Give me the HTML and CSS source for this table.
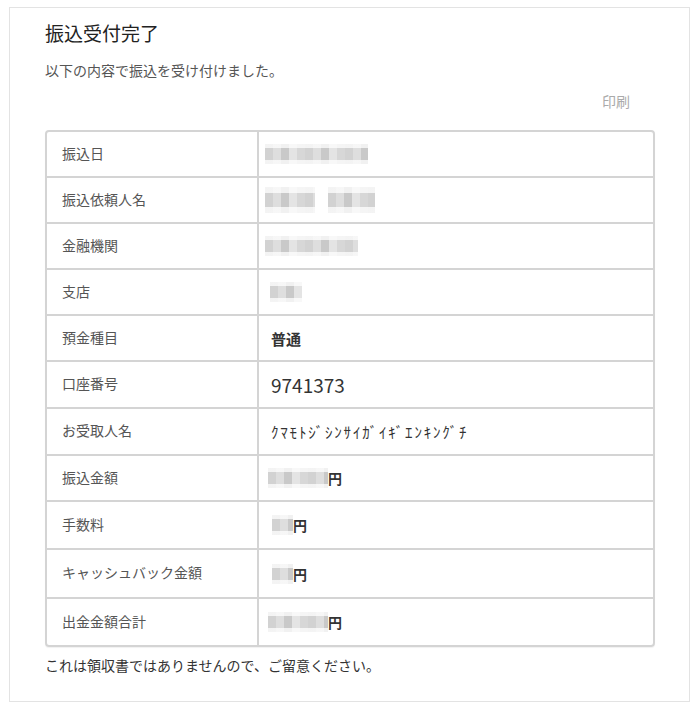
FILE: index.html
```html
<!DOCTYPE html>
<html lang="ja">
<head>
<meta charset="utf-8">
<title>振込受付完了</title>
<link rel="stylesheet" href="styles.css">
</head>
<body>
<div class="box">
  <h1 class="title">振込受付完了</h1>
  <p class="lead">以下の内容で振込を受け付けました。</p>
  <div class="print-row"><a class="print">印刷</a></div>
  <div class="table">
    <div class="row first">
      <div class="label">振込日</div>
      <div class="value"><span class="mosaic m-date"></span></div>
    </div>
    <div class="row">
      <div class="label">振込依頼人名</div>
      <div class="value"><span class="mosaic m-name1"></span><span class="mosaic m-name2"></span></div>
    </div>
    <div class="row">
      <div class="label">金融機関</div>
      <div class="value"><span class="mosaic m-bank"></span></div>
    </div>
    <div class="row">
      <div class="label">支店</div>
      <div class="value"><span class="mosaic m-branch"></span></div>
    </div>
    <div class="row">
      <div class="label">預金種目</div>
      <div class="value bold">普通</div>
    </div>
    <div class="row h45">
      <div class="label">口座番号</div>
      <div class="value num">9741373</div>
    </div>
    <div class="row h45">
      <div class="label">お受取人名</div>
      <div class="value kana">ｸﾏﾓﾄｼﾞｼﾝｻｲｶﾞｲｷﾞｴﾝｷﾝｸﾞﾁ</div>
    </div>
    <div class="row">
      <div class="label">振込金額</div>
      <div class="value"><span class="mosaic m-amount"></span><span class="yen">円</span></div>
    </div>
    <div class="row h46">
      <div class="label">手数料</div>
      <div class="value"><span class="mosaic m-small"></span><span class="yen">円</span></div>
    </div>
    <div class="row h47">
      <div class="label">キャッシュバック金額</div>
      <div class="value"><span class="mosaic m-small"></span><span class="yen">円</span></div>
    </div>
    <div class="row h46">
      <div class="label">出金金額合計</div>
      <div class="value"><span class="mosaic m-amount"></span><span class="yen">円</span></div>
    </div>
  </div>
  <p class="note">これは領収書ではありませんので、ご留意ください。</p>
</div>
</body>
</html>
```

FILE: styles.css
```css
html, body {
  margin: 0;
  padding: 0;
  background: #fff;
}
body {
  padding: 7px 10px 8px 9px;
  font-family: "Noto Sans CJK JP", "Noto Sans", sans-serif;
  color: #333;
}
.box {
  border: 1px solid #e3e3e3;
  padding: 13px 34px 26px 35px;
}
.title {
  margin: 0;
  font-size: 19px;
  font-weight: 400;
  line-height: 24px;
  color: #222;
}
.lead {
  margin: 15px 0 0;
  font-size: 14px;
  line-height: 20px;
  color: #555;
}
.print-row {
  display: flex;
  justify-content: flex-end;
  padding-right: 25px;
  margin-top: 11px;
}
.print {
  font-size: 14px;
  line-height: 20px;
  color: #aaa;
}
.table {
  margin-top: 19px;
  width: 606px;
  border: 2px solid #d4d4d4;
  border-radius: 4px;
  box-shadow: 0 1px 1px rgba(0,0,0,0.06);
}
.row {
  display: grid;
  grid-template-columns: 212px 1fr;
  height: 44px;
  border-top: 2px solid #d4d4d4;
}
.row.first {
  border-top: none;
}
.row.h45 { height: 45px; }
.row.h46 { height: 46px; }
.row.h47 { height: 47px; }
.label {
  display: flex;
  align-items: center;
  padding-left: 15px;
  padding-bottom: 3px;
  border-right: 2px solid #d4d4d4;
  font-size: 14px;
  color: #555;
}
.value {
  display: flex;
  align-items: center;
  padding-left: 12px;
  font-size: 14px;
  color: #333;
}
.value.bold {
  font-weight: 700;
  font-size: 15px;
}
.value.num {
  font-size: 19px;
}
.value.kana {
  font-size: 15px;
  letter-spacing: 1.8px;
}
.yen {
  font-weight: 700;
  font-size: 14px;
  color: #333;
}
.mosaic {
  display: inline-block;
  height: 20px;
  background:
    linear-gradient(to bottom, rgba(255,255,255,0.75) 0 22%, rgba(255,255,255,0) 22% 78%, rgba(255,255,255,0.75) 78%),
    repeating-linear-gradient(90deg, #d2d2d2 0 8px, #dedede 8px 16px, #c9c9c9 16px 24px, #e4e4e4 24px 32px, #d7d7d7 32px 40px);
}
.m-date { width: 103px; margin-left: -6px; }
.m-name1 { width: 50px; height: 26px; margin-left: -6px; }
.m-name2 { width: 47px; height: 26px; margin-left: 13px; }
.m-bank { width: 93px; margin-left: -6px; }
.m-branch { width: 32px; margin-left: -1px; }
.m-amount { width: 60px; margin-left: -3px; }
.m-small { width: 21px; margin-left: 1px; }
.note {
  margin: 8px 0 0;
  font-size: 14px;
  line-height: 20px;
  color: #333;
}
```
